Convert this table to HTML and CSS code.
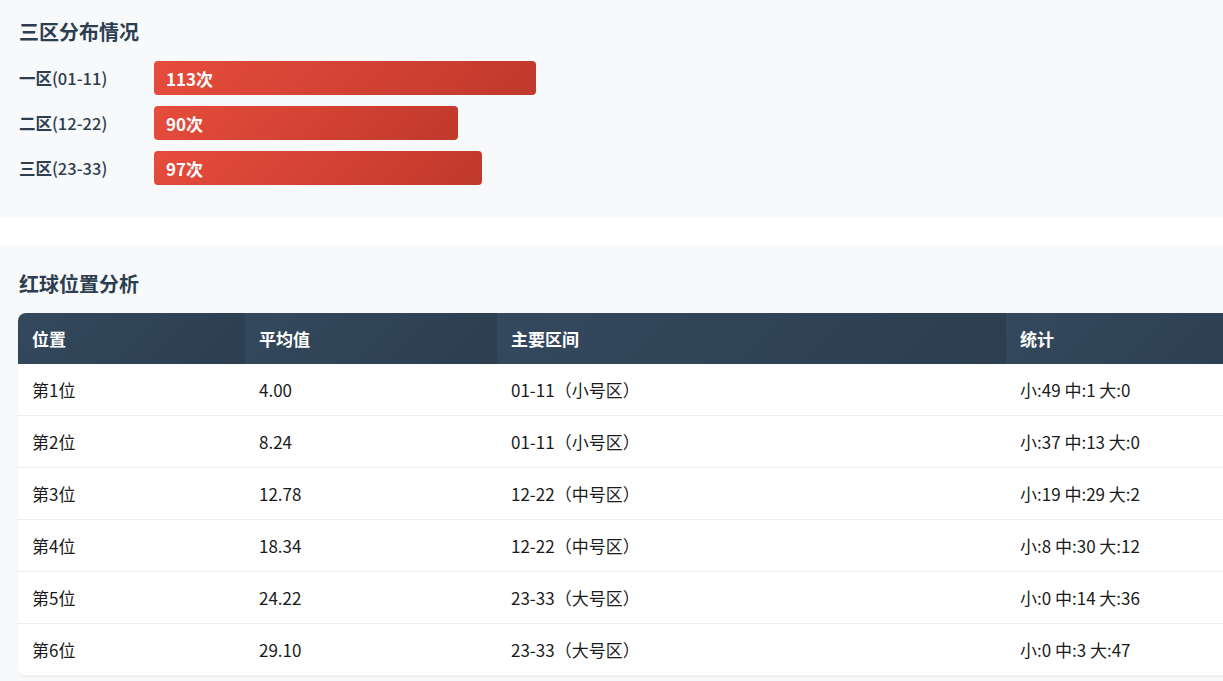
FILE: index.html
```html
<!DOCTYPE html>
<html lang="zh-CN">
<head>
<meta charset="utf-8">
<title>分析</title>
<link rel="stylesheet" href="styles.css">
</head>
<body>
<section class="card card-zones">
  <h3 class="card-title">三区分布情况</h3>
  <div class="zone-list">
    <div class="zone-row">
      <span class="zone-label">一区<span class="zone-range">(01-11)</span></span>
      <div class="zone-bar" style="width:382px">113次</div>
    </div>
    <div class="zone-row">
      <span class="zone-label">二区<span class="zone-range">(12-22)</span></span>
      <div class="zone-bar" style="width:304px">90次</div>
    </div>
    <div class="zone-row">
      <span class="zone-label">三区<span class="zone-range">(23-33)</span></span>
      <div class="zone-bar" style="width:328px">97次</div>
    </div>
  </div>
</section>
<section class="card card-positions">
  <h3 class="card-title">红球位置分析</h3>
  <table class="pos-table">
    <thead>
      <tr><th class="c1">位置</th><th class="c2">平均值</th><th class="c3">主要区间</th><th class="c4">统计</th></tr>
    </thead>
    <tbody>
      <tr><td>第1位</td><td>4.00</td><td>01-11（小号区）</td><td>小:49 中:1 大:0</td></tr>
      <tr><td>第2位</td><td>8.24</td><td>01-11（小号区）</td><td>小:37 中:13 大:0</td></tr>
      <tr><td>第3位</td><td>12.78</td><td>12-22（中号区）</td><td>小:19 中:29 大:2</td></tr>
      <tr><td>第4位</td><td>18.34</td><td>12-22（中号区）</td><td>小:8 中:30 大:12</td></tr>
      <tr><td>第5位</td><td>24.22</td><td>23-33（大号区）</td><td>小:0 中:14 大:36</td></tr>
      <tr><td>第6位</td><td>29.10</td><td>23-33（大号区）</td><td>小:0 中:3 大:47</td></tr>
    </tbody>
  </table>
</section>
</body>
</html>
```
FILE: styles.css
```css
html, body {
  margin: 0;
  padding: 0;
  background: #ffffff;
  overflow: hidden;
  font-family: "Noto Sans CJK SC", "Noto Sans", sans-serif;
}

.card {
  background: #f8f9fa;
  padding: 0 0 0 18px;
  overflow: hidden;
}

.card-zones {
  padding-top: 19px;
  padding-bottom: 32px;
  margin-bottom: 29px;
}

.card-zones .card-title {
  margin-bottom: 17px;
}

.card-positions {
  padding-top: 25px;
  padding-bottom: 6px;
}

.card-positions .card-title {
  margin-bottom: 17px;
}

.card-title {
  margin: 0 0 15px 1px;
  font-size: 20px;
  line-height: 25px;
  font-weight: 700;
  color: #2c3e50;
}

.zone-list {
  display: flex;
  flex-direction: column;
  gap: 11px;
}

.zone-row {
  display: flex;
  align-items: center;
}

.zone-label {
  width: 135px;
  padding-left: 1px;
  font-size: 16.5px;
  line-height: 22px;
  font-weight: 700;
  color: #2c3e50;
}

.zone-range {
  font-weight: 500;
}

.zone-bar {
  height: 34px;
  box-sizing: border-box;
  padding-left: 12px;
  display: flex;
  align-items: center;
  border-radius: 4px;
  background: linear-gradient(135deg, #e74c3c, #c0392b);
  color: #ffffff;
  font-size: 17px;
  font-weight: 700;
}

.pos-table {
  width: 1260px;
  border-collapse: separate;
  border-spacing: 0;
  background: #ffffff;
  border-radius: 8px;
  overflow: hidden;
  box-shadow: 0 1px 2px rgba(0, 0, 0, 0.06);
}

.pos-table th {
  height: 51px;
  box-sizing: border-box;
  padding: 0 14px;
  text-align: left;
  font-size: 17px;
  font-weight: 700;
  color: #ffffff;
  background: linear-gradient(135deg, #34495e, #2c3e50);
}

.pos-table .c1 { width: 227px; }
.pos-table .c2 { width: 252px; }
.pos-table .c3 { width: 509px; }

.pos-table td {
  height: 52px;
  box-sizing: border-box;
  padding: 0 14px 1px;
  font-size: 17px;
  color: #1a1a1a;
  border-bottom: 1px solid #eeeeee;
}
```
